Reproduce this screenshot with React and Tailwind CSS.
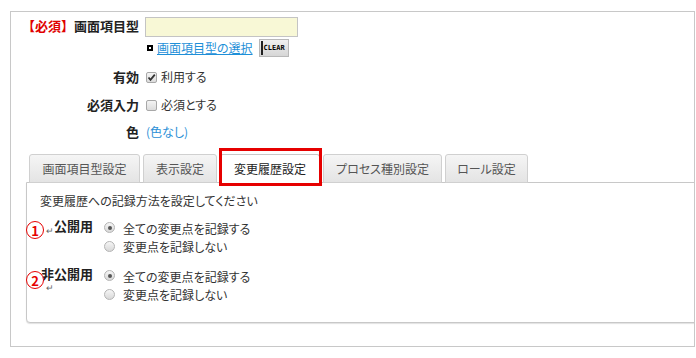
import React from "react";

const font = {
  fontFamily: '"Noto Sans CJK JP", "Noto Sans", sans-serif',
  fontFeatureSettings: '"palt"',
};

function Checkbox({ checked }) {
  return (
    <span className="relative inline-block w-[11px] h-[11px] border border-[#a8a8a8] rounded-[2px] bg-gradient-to-b from-[#f4f4f4] to-[#dcdcdc]">
      {checked && (
        <svg viewBox="0 0 11 11" className="absolute -left-px -top-px w-[11px] h-[11px]">
          <path d="M2.5 5.5 L4.5 7.8 L8.8 2.6" fill="none" stroke="#333" strokeWidth="1.8" />
        </svg>
      )}
    </span>
  );
}

function Radio({ checked }) {
  return (
    <span className="flex items-center justify-center w-[11px] h-[11px] rounded-full border border-[#b4b4b4] bg-gradient-to-b from-[#f6f6f6] to-[#d8d8d8]">
      {checked && <span className="w-[4px] h-[4px] rounded-full bg-[#555]" />}
    </span>
  );
}

function FormRow({ label, children, className = "" }) {
  return (
    <div className={"flex items-center " + className}>
      <div className="w-[128px] text-right font-bold text-[13px] text-[#222] leading-[20px]">{label}</div>
      <div className="ml-[7px] flex items-center text-[12px] leading-[20px] text-[#333]">{children}</div>
    </div>
  );
}

function RadioGroup({ label, top }) {
  return (
    <div className={"flex " + top}>
      <div className="w-[66px] text-right font-bold text-[13px] text-[#222] leading-[19px] -mt-[2px]">{label}</div>
      <div className="ml-[11px] flex flex-col">
        <div className="flex items-center h-[19px]">
          <Radio checked />
          <span className="ml-[8px] text-[12px] text-[#333] mt-[2px]">全ての変更点を記録する</span>
        </div>
        <div className="flex items-center h-[19px]">
          <Radio />
          <span className="ml-[8px] text-[12px] text-[#333]">変更点を記録しない</span>
        </div>
      </div>
    </div>
  );
}

const tabs = [
  { name: "画面項目型設定", w: "w-[111px]" },
  { name: "表示設定", w: "w-[74px]" },
  { name: "変更履歴設定", w: "w-[100px]", active: true },
  { name: "プロセス種別設定", w: "w-[119px]" },
  { name: "ロール設定", w: "w-[83px]" },
];

export default function App() {
  return (
    <div className="w-[696px] h-[358px] bg-white pl-[10px] pt-[11px]" style={font}>
      <div className="w-[685px] h-[336px] border border-[#c8c8c8] overflow-hidden">
        {/* form */}
        <div className="pt-[5px]">
          <div className="flex items-start">
            <div className="w-[128px] text-right font-bold text-[13px] leading-[18px] text-[#222] [font-feature-settings:normal]">
              <span className="text-[#e00000]">【必須】</span>画面項目型
            </div>
            <div className="ml-[6px] w-[153px] h-[20px] border border-[#c4c4c4] bg-[#f8f8d6]" />
          </div>
          <div className="flex items-center mt-[2px] ml-[136px] h-[18px]">
            <span className="relative w-[6px] h-[6px] bg-black">
              <span className="absolute left-[2px] top-[2px] w-[2px] h-[2px] bg-white" />
            </span>
            <a className="ml-[4px] text-[12px] text-[#1e8fd8] underline leading-[14px]">画面項目型の選択</a>
            <span className="ml-[6px] relative flex items-center h-[18px] w-[30px] border border-[#b8b8b8] bg-gradient-to-b from-[#f0f0f0] to-[#d6d6d6]">
              <span className="absolute left-[1px] top-[1px] w-[2px] h-[14px] bg-[#222]" />
              <span className="ml-[4px] text-[7px] font-bold leading-none text-black" style={{ fontFamily: '"DejaVu Sans Mono", monospace' }}>CLEAR</span>
            </span>
          </div>
          <FormRow label="有効" className="mt-[10px]">
            <Checkbox checked />
            <span className="ml-[4px]">利用する</span>
          </FormRow>
          <FormRow label="必須入力" className="mt-[8px]">
            <Checkbox />
            <span className="ml-[4px]">必須とする</span>
          </FormRow>
          <FormRow label="色" className="mt-[7px]">
            <span className="text-[#2b8fd6]">(色なし)</span>
          </FormRow>
        </div>

        {/* tabs */}
        <div className="mt-[12px] ml-[15px]">
          <div className="flex gap-[3px] ml-[3px] relative z-10">
            {tabs.map((t) => (
              <div
                key={t.name}
                className={
                  "relative h-[29px] -mb-px flex items-center justify-center rounded-t-[3px] border text-[12px] " +
                  t.w +
                  (t.active
                    ? " bg-white border-[#c8c8c8] border-b-white text-[#222]"
                    : " bg-gradient-to-b from-[#f5f5f5] to-[#e4e4e4] border-[#d0d0d0] text-[#555]")
                }
              >
                {t.name}
                {t.active && (
                  <span className="absolute -top-[7px] -left-[2px] -right-[3px] -bottom-[4px] border-[3px] border-[#e60000]" />
                )}
              </div>
            ))}
          </div>
          <div className="relative w-[690px] h-[141px] border border-[#c8c8c8] rounded-bl-[4px] bg-white shadow-[0_1px_1px_rgba(0,0,0,0.12)] pl-[13px] pt-[11px]">
            <div className="text-[12px] leading-[14px] text-[#333]">変更履歴への記録方法を設定してください</div>
            <div className="-ml-[13px]">
              <RadioGroup label="公開用" top="mt-[10px]" />
              <RadioGroup label="非公開用" top="mt-[10px]" />
            </div>

            {/* annotations */}
            <span className="absolute -left-px top-[38px] w-[18px] h-[18px] rounded-full border-[1.5px] border-[#e60000] bg-white flex items-center justify-center text-[13px] font-bold text-[#e60000] leading-none">1</span>
            <span className="absolute left-[19px] top-[43px] text-[9px] text-[#666] leading-none">↵</span>
            <span className="absolute -left-px top-[88px] w-[18px] h-[18px] rounded-full border-[1.5px] border-[#e60000] bg-white flex items-center justify-center text-[13px] font-bold text-[#e60000] leading-none">2</span>
            <span className="absolute left-[19px] top-[100px] text-[9px] text-[#666] leading-none">↵</span>
          </div>
        </div>
      </div>
    </div>
  );
}
